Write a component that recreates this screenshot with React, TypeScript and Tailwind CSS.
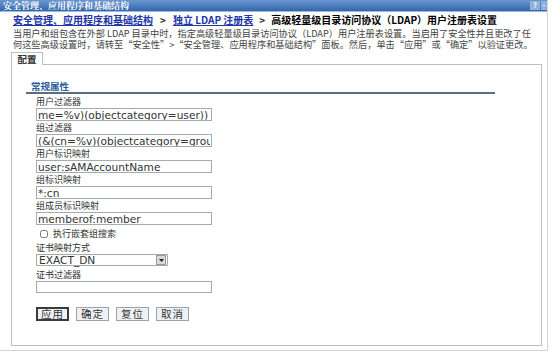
import { useState } from 'react';

const cjk = "font-['Noto_Sans_CJK_SC','Liberation_Sans',sans-serif]";
const mono = "font-['DejaVu_Sans',sans-serif]";

function Field({ label, value }: { label: string; value: string }) {
  return (
    <div className="flex flex-col">
      <label className="h-[13px] text-[9px] leading-[13px] text-[#333]">{label}</label>
      <input
        readOnly
        value={value}
        className={`w-[176px] h-[13px] border border-[#a3acb5] bg-white px-[1px] text-[10.6px] leading-[11px] text-[#333] ${mono} outline-none`}
      />
    </div>
  );
}

export default function App() {
  const [nested, setNested] = useState(false);

  return (
    <div className={`w-[554px] h-[353px] bg-white overflow-hidden ${cjk}`}>
      <div className="w-[548px] h-[351px] border-r border-b border-[#d4d4d4]">
        {/* Title bar */}
        <div className="h-[12px] flex items-center justify-between bg-gradient-to-b from-[#6b97cf] to-[#3266ac] pl-[3px] border-b border-[#9fb9dc]">
          <span className="text-[9px] leading-[12px] font-bold text-white font-['Noto_Serif_CJK_SC','Noto_Sans_CJK_SC',serif]">
            安全管理、应用程序和基础结构
          </span>
          <div className="flex gap-[1px] h-[9px]">
            <span className="w-[10px] h-[9px] bg-[#8fb1dc] text-[7px] leading-[9px] font-bold text-white text-center">?</span>
            <span className="w-[6px] h-[9px] bg-[#8fb1dc] text-[7px] leading-[9px] font-bold text-white text-center">-</span>
          </div>
        </div>

        <div className="pl-[13px] pt-[2px]">
          {/* Breadcrumb */}
          <div className="h-[12px] text-[10px] leading-[12px] font-bold whitespace-nowrap flex">
            <a className="text-[#2236a8] underline">安全管理、应用程序和基础结构</a>
            <span className="text-[#333] mx-[7px]">&gt;</span>
            <a className="text-[#2236a8] underline">独立 LDAP 注册表</a>
            <span className="text-[#333] mx-[6px]">&gt;</span>
            <span className="text-black">高级轻量级目录访问协议（LDAP）用户注册表设置</span>
          </div>
          <p className="mt-[2px] text-[9.2px] leading-[11px] text-[#444] whitespace-nowrap">
            当用户和组包含在外部 LDAP 目录中时，指定高级轻量级目录访问协议（LDAP）用户注册表设置。当启用了安全性并且更改了任
            <br />
            何这些高级设置时，请转至“安全性”&gt;“安全管理、应用程序和基础结构”面板。然后，单击“应用”或“确定”以验证更改。
          </p>
        </div>

        <div className="pl-[11px] mt-[2px]">
          {/* Tab */}
          <div className="flex">
            <div className="w-[32px] h-[13px] border border-b-0 border-[#b9c0c8] bg-white text-[9.5px] leading-[12px] font-bold text-[#333] text-center relative z-10">
              配置
            </div>
          </div>

          {/* Panel */}
          <div className="-mt-[1px] w-[531px] h-[282px] border border-[#b9c0c8] pl-[14px] pt-[16px]">
            <div className="w-[469px] h-[13px] border-b-2 border-[#5b6f80] pl-[5px] text-[9.5px] leading-[11px] font-bold text-[#2a5d9a]">
              常规属性
            </div>

            <div className="pl-[10px] pt-[1px] flex flex-col">
              <Field label="用户过滤器" value="me=%v)(objectcategory=user))" />
              <Field label="组过滤器" value="(&(cn=%v)(objectcategory=group))" />
              <Field label="用户标识映射" value="user:sAMAccountName" />
              <Field label="组标识映射" value="*:cn" />
              <Field label="组成员标识映射" value="memberof:member" />

              <label className="flex items-center gap-[5px] pl-[4px] mt-[2px] h-[13px] text-[9px] text-[#333]">
                <input
                  type="checkbox"
                  checked={nested}
                  onChange={(e) => setNested(e.target.checked)}
                  className="w-[8px] h-[8px] m-0"
                />
                执行嵌套组搜索
              </label>

              <div className="flex flex-col mt-[2px]">
                <label className="h-[12px] text-[9px] leading-[12px] text-[#333]">证书映射方式</label>
                <div className="w-[132px] h-[12px] border border-[#a3acb5] flex items-center bg-white">
                  <span className={`flex-1 pl-[2px] text-[10.6px] leading-[11px] text-[#333] ${mono}`}>EXACT_DN</span>
                  <span className="w-[10px] h-[10px] mr-[1px] bg-[#d8d8d8] border border-[#999] flex items-center justify-center">
                    <svg width="5" height="3" viewBox="0 0 5 3"><path d="M0 0h5L2.5 3z" fill="#222" /></svg>
                  </span>
                </div>
              </div>

              <div className="flex flex-col mt-[3px]">
                <label className="h-[12px] text-[9px] leading-[12px] text-[#333]">证书过滤器</label>
                <input readOnly className="w-[176px] h-[12px] border border-[#a3acb5] bg-white outline-none" />
              </div>

              <div className="flex gap-[7px] mt-[14px]">
                <button className="w-[33px] h-[14px] border-2 border-[#3a3a3a] bg-[#eef0f4] text-[10.5px] leading-[10px] tracking-[1px] text-[#333]">应用</button>
                <button className="w-[33px] h-[14px] border border-[#9aa4ae] bg-[#eef0f4] text-[10.5px] leading-[12px] tracking-[1px] text-[#333]">确定</button>
                <button className="w-[33px] h-[14px] border border-[#9aa4ae] bg-[#eef0f4] text-[10.5px] leading-[12px] tracking-[1px] text-[#333]">复位</button>
                <button className="w-[33px] h-[14px] border border-[#9aa4ae] bg-[#eef0f4] text-[10.5px] leading-[12px] tracking-[1px] text-[#333]">取消</button>
              </div>
            </div>
          </div>
        </div>
      </div>
    </div>
  );
}
